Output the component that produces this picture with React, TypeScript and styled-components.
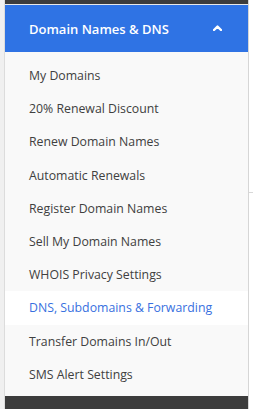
import React from 'react';
import styled, { createGlobalStyle } from 'styled-components';

const GlobalStyle = createGlobalStyle`
  html, body {
    margin: 0;
    padding: 0;
    background: #ffffff;
  }
  body {
    font-family: "Open Sans", "Noto Sans", sans-serif;
  }
`;

const items = [
  'My Domains',
  '20% Renewal Discount',
  'Renew Domain Names',
  'Automatic Renewals',
  'Register Domain Names',
  'Sell My Domain Names',
  'WHOIS Privacy Settings',
  'DNS, Subdomains & Forwarding',
  'Transfer Domains In/Out',
  'SMS Alert Settings',
];

function App() {
  return (
    <>
      <GlobalStyle />
      <Page>
        <Gutter />
        <Sidebar>
          <TopBar />
          <Header>
            <HeaderTitle>Domain Names &amp; DNS</HeaderTitle>
            <Chevron width="9" height="6" viewBox="0 0 9 6">
              <polyline points="1,5 4.5,1.6 8,5" />
            </Chevron>
          </Header>
          <Menu>
            {items.map((label) => (
              <MenuItem key={label} $active={label.startsWith('DNS')}>
                {label}
              </MenuItem>
            ))}
          </Menu>
          <BottomBar />
        </Sidebar>
        <RightGutter>
          <Rule />
        </RightGutter>
      </Page>
    </>
  );
}

export default App;

const Page = styled.div`
  display: flex;
  width: 253px;
  height: 409px;
  overflow: hidden;
`;

const Gutter = styled.div`
  width: 4px;
  background: #f0f0f0;
  border-right: 1px solid #dcdcdc;
`;

const Sidebar = styled.div`
  width: 243px;
  display: flex;
  flex-direction: column;
  background: #f9f9f9;
  border-right: 1px solid #d6d6d6;
`;

const TopBar = styled.div`
  height: 4px;
  background: #3c3c3c;
  border-bottom: 1px solid #e8e8e8;
`;

const Header = styled.div`
  height: 47px;
  background: #2f73e4;
  display: flex;
  align-items: center;
  justify-content: space-between;
  padding: 0 26px 0 24px;
`;

const HeaderTitle = styled.span`
  color: #ffffff;
  font-size: 13px;
  font-weight: 600;
`;

const Chevron = styled.svg`
  fill: none;
  stroke: #ffffff;
  stroke-width: 2.4;
  stroke-linecap: round;
  stroke-linejoin: round;
  margin-top: -1px;
`;

const Menu = styled.ul`
  list-style: none;
  margin: 0;
  padding: 7px 0 5px;
  display: flex;
  flex-direction: column;
`;

const MenuItem = styled.li<{ $active?: boolean }>`
  height: 33.2px;
  display: flex;
  align-items: center;
  padding-left: 24px;
  font-size: 12.3px;
  color: ${(p) => (p.$active ? '#3870e0' : '#404040')};
  background: ${(p) => (p.$active ? '#ffffff' : 'transparent')};
  white-space: nowrap;
`;

const BottomBar = styled.div`
  flex: 1;
  background: #3c3c3c;
`;

const RightGutter = styled.div`
  flex: 1;
  background: #ffffff;
  padding-top: 192px;
`;

const Rule = styled.div`
  height: 1px;
  background: #d8d8d8;
`;
